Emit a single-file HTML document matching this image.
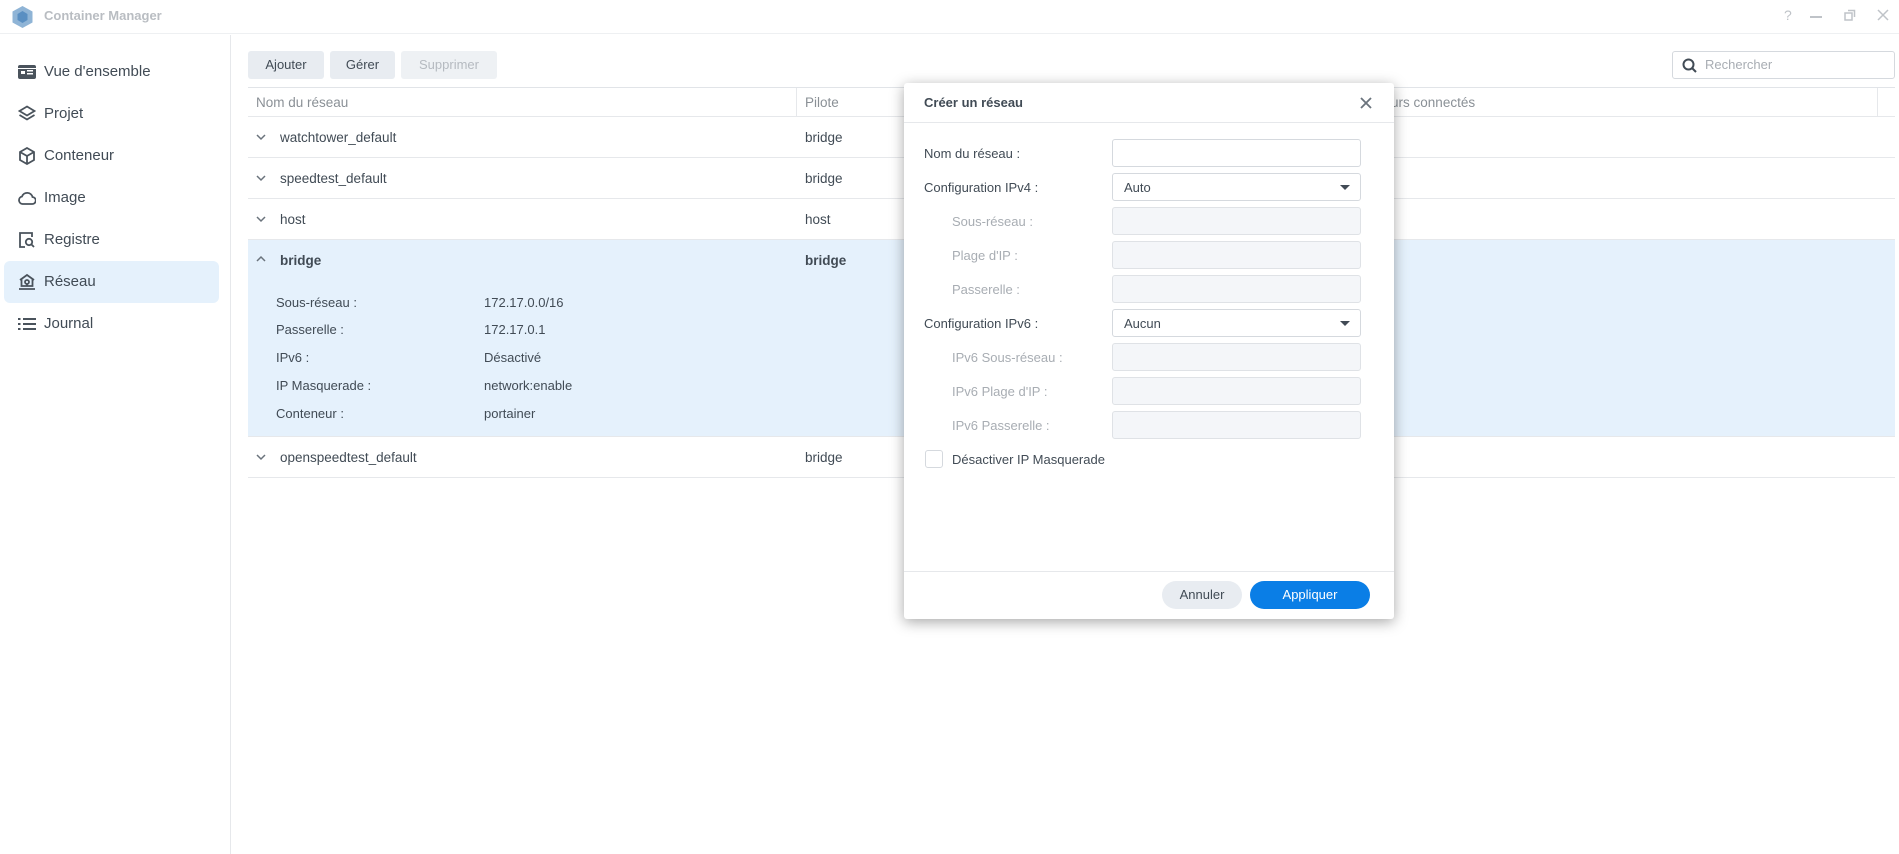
<!DOCTYPE html>
<html><head><meta charset="utf-8"><style>
*{box-sizing:border-box;margin:0;padding:0}
body{width:1899px;height:854px;overflow:hidden;background:#fff;font-family:"Liberation Sans",Verdana,sans-serif;color:#414b55;font-size:13px;position:relative}
.a{position:absolute}
.tb{left:0;top:0;width:1899px;height:34px;border-bottom:1px solid #eef0f2}
.side{left:0;top:35px;width:231px;height:819px;border-right:1px solid #e6e8eb}
.nav{position:absolute;left:4px;width:215px;height:42px;border-radius:6px;font-size:15px;line-height:42px;padding-left:40px}
.nav svg{position:absolute;left:14px;top:12px}
.sel{background:#e5f1fc}
.btn{top:51px;height:28px;border-radius:3px;background:#e8ecf1;font-size:13px;line-height:28px;text-align:center;color:#414b55}
.row{left:248px;width:1647px;border-bottom:1px solid #e6e8eb}
.rt{position:absolute;left:32px;font-size:13.5px}
.chev{position:absolute;left:8px}
.lbl{position:absolute;left:28px}
.val{position:absolute;left:236px}
.inp{left:1112px;width:249px;height:28px;border:1px solid #d5d9de;border-radius:3px;background:#fff}
.dis{background:#f4f6f9;border-color:#dfe2e6}
.fl{left:924px;font-size:13px}
.fi{left:952px;color:#a8adb3}
</style></head><body>
<div class="a tb"></div>
<svg class="a" style="left:11px;top:5px" width="23" height="24" viewBox="0 0 23 24"><polygon points="11.5,1 21.5,6.5 21.5,17.5 11.5,23 1.5,17.5 1.5,6.5" fill="#8fb4d6"/><polygon points="11.5,6 16.5,9 16.5,15 11.5,18 6.5,15 6.5,9" fill="#5a8fc2"/></svg>
<div class="a" style="left:44px;top:8px;font-weight:bold;color:#b9bdc2;font-size:13px">Container Manager</div>
<div class="a" style="left:1784px;top:7px;color:#bfc3c8;font-size:14px">?</div>
<div class="a" style="left:1810px;top:16px;width:12px;height:1.5px;background:#bfc3c8"></div>
<svg class="a" style="left:1844px;top:9px" width="12" height="12"><rect x="1" y="4" width="7" height="7" fill="none" stroke="#bfc3c8" stroke-width="1.5"/><path d="M4 1.5H10.5V8" fill="none" stroke="#bfc3c8" stroke-width="1.5"/></svg>
<svg class="a" style="left:1877px;top:9px" width="12" height="12"><path d="M1 1L11 11M11 1L1 11" stroke="#bfc3c8" stroke-width="1.5"/></svg>

<div class="a side">
<div class="nav" style="top:16px"><svg width="18" height="18" viewBox="0 0 18 18"><rect x="0" y="2" width="18" height="14" rx="2" fill="#4a535c"/><rect x="3" y="8" width="4" height="3" fill="#fff"/><rect x="9" y="7" width="6" height="1.5" fill="#fff"/><rect x="9" y="10" width="6" height="1.5" fill="#fff"/><rect x="0" y="5" width="18" height="1" fill="#fff"/></svg>Vue d'ensemble</div>
<div class="nav" style="top:58px"><svg width="18" height="18" viewBox="0 0 18 18" fill="none" stroke="#4a535c" stroke-width="1.8"><path d="M9 1.5L16.5 6L9 10.5L1.5 6Z"/><path d="M1.5 10L9 14.5L16.5 10"/></svg>Projet</div>
<div class="nav" style="top:100px"><svg width="18" height="18" viewBox="0 0 18 18" fill="none" stroke="#4a535c" stroke-width="1.8"><path d="M9 1L16 5V13L9 17L2 13V5Z"/><path d="M2 5L9 9L16 5M9 9V17"/></svg>Conteneur</div>
<div class="nav" style="top:142px"><svg width="18" height="18" viewBox="0 0 18 18" fill="none" stroke="#4a535c" stroke-width="1.8"><path d="M4.5 15H14a3.5 3.5 0 0 0 .5-7A5.5 5.5 0 0 0 4 7.5 3.8 3.8 0 0 0 4.5 15Z"/></svg>Image</div>
<div class="nav" style="top:184px"><svg width="18" height="18" viewBox="0 0 18 18" fill="none" stroke="#4a535c" stroke-width="1.8"><path d="M7 16H2V2H14V6"/><circle cx="11" cy="11" r="3.2"/><path d="M13.5 13.5L16 16"/></svg>Registre</div>
<div class="nav sel" style="top:226px"><svg width="18" height="18" viewBox="0 0 18 18" fill="none" stroke="#4a535c" stroke-width="1.8"><path d="M2 7L9 2L16 7M3.5 6V13H14.5V6"/><circle cx="9" cy="9" r="2"/><path d="M9 11V13M1 16H17"/></svg>Réseau</div>
<div class="nav" style="top:268px"><svg width="18" height="18" viewBox="0 0 18 18" fill="#4a535c"><rect x="0" y="3" width="2.5" height="2"/><rect x="5" y="3" width="13" height="2"/><rect x="0" y="8" width="2.5" height="2"/><rect x="5" y="8" width="13" height="2"/><rect x="0" y="13" width="2.5" height="2"/><rect x="5" y="13" width="13" height="2"/></svg>Journal</div>
</div>

<div class="a btn" style="left:248px;width:76px">Ajouter</div>
<div class="a btn" style="left:330px;width:65px">Gérer</div>
<div class="a btn" style="left:401px;width:96px;background:#eef1f4;color:#b5bac0">Supprimer</div>
<div class="a" style="left:1672px;top:51px;width:223px;height:28px;border:1px solid #d5d9de;border-radius:3px"></div>
<svg class="a" style="left:1682px;top:58px" width="15" height="15" fill="none" stroke="#414b55" stroke-width="2"><circle cx="6.5" cy="6.5" r="5"/><path d="M10 10L14 14"/></svg>
<div class="a" style="left:1705px;top:57px;color:#a8adb3">Rechercher</div>

<div class="a" style="left:248px;top:87px;width:1647px;height:1px;background:#e1e4e8"></div>
<div class="a row" style="top:88px;height:29px;color:#8a9096"><span class="rt" style="left:8px;top:7px">Nom du réseau</span><span class="rt" style="left:557px;top:7px">Pilote</span><span class="rt" style="left:1092px;top:7px">Conteneurs connectés</span></div>
<div class="a" style="left:796px;top:88px;width:1px;height:28px;background:#e6e8eb"></div>
<div class="a" style="left:1877px;top:88px;width:1px;height:28px;background:#e6e8eb"></div>

<svg width="0" height="0" style="position:absolute"><defs><path id="dn" d="M1 1L5 5L9 1" fill="none" stroke="#6a737c" stroke-width="1.5"/></defs></svg>
<div class="a row" style="top:117px;height:41px"><svg class="chev" style="top:17px" width="10" height="7"><use href="#dn"/></svg><span class="rt" style="top:13px">watchtower_default</span><span class="rt" style="left:557px;top:13px">bridge</span></div>
<div class="a row" style="top:158px;height:41px"><svg class="chev" style="top:17px" width="10" height="7"><use href="#dn"/></svg><span class="rt" style="top:13px">speedtest_default</span><span class="rt" style="left:557px;top:13px">bridge</span></div>
<div class="a row" style="top:199px;height:41px"><svg class="chev" style="top:17px" width="10" height="7"><use href="#dn"/></svg><span class="rt" style="top:13px">host</span><span class="rt" style="left:557px;top:13px">host</span></div>
<div class="a row" style="top:240px;height:197px;background:#e5f1fc">
<svg class="chev" style="top:15px" width="10" height="7"><path d="M1 6L5 2L9 6" fill="none" stroke="#6a737c" stroke-width="1.5"/></svg>
<span class="rt" style="top:13px;font-weight:bold">bridge</span><span class="rt" style="left:557px;top:13px;font-weight:bold">bridge</span>
<span class="lbl" style="top:55px">Sous-réseau :</span><span class="val" style="top:55px">172.17.0.0/16</span>
<span class="lbl" style="top:82px">Passerelle :</span><span class="val" style="top:82px">172.17.0.1</span>
<span class="lbl" style="top:110px">IPv6 :</span><span class="val" style="top:110px">Désactivé</span>
<span class="lbl" style="top:138px">IP Masquerade :</span><span class="val" style="top:138px">network:enable</span>
<span class="lbl" style="top:166px">Conteneur :</span><span class="val" style="top:166px">portainer</span>
</div>
<div class="a row" style="top:437px;height:41px"><svg class="chev" style="top:17px" width="10" height="7"><use href="#dn"/></svg><span class="rt" style="top:13px">openspeedtest_default</span><span class="rt" style="left:557px;top:13px">bridge</span></div>

<div class="a" style="left:904px;top:83px;width:490px;height:536px;background:#fff;border-radius:3px;box-shadow:0 3px 14px rgba(0,0,0,.35)"></div>
<div class="a" style="left:924px;top:95px;font-weight:bold;font-size:13px">Créer un réseau</div>
<svg class="a" style="left:1360px;top:97px" width="12" height="12"><path d="M1 1L11 11M11 1L1 11" stroke="#6a737c" stroke-width="1.8"/></svg>
<div class="a" style="left:904px;top:122px;width:490px;height:1px;background:#e6e8eb"></div>

<div class="a fl" style="top:146px">Nom du réseau :</div><div class="a inp" style="top:139px"></div>
<div class="a fl" style="top:180px">Configuration IPv4 :</div><div class="a inp" style="top:173px"><span class="a" style="left:11px;top:6px">Auto</span><svg class="a" style="left:227px;top:11px" width="10" height="6"><path d="M0 0H10L5 5Z" fill="#414b55"/></svg></div>
<div class="a fl fi" style="top:214px">Sous-réseau :</div><div class="a inp dis" style="top:207px"></div>
<div class="a fl fi" style="top:248px">Plage d'IP :</div><div class="a inp dis" style="top:241px"></div>
<div class="a fl fi" style="top:282px">Passerelle :</div><div class="a inp dis" style="top:275px"></div>
<div class="a fl" style="top:316px">Configuration IPv6 :</div><div class="a inp" style="top:309px"><span class="a" style="left:11px;top:6px">Aucun</span><svg class="a" style="left:227px;top:11px" width="10" height="6"><path d="M0 0H10L5 5Z" fill="#414b55"/></svg></div>
<div class="a fl fi" style="top:350px">IPv6 Sous-réseau :</div><div class="a inp dis" style="top:343px"></div>
<div class="a fl fi" style="top:384px">IPv6 Plage d'IP :</div><div class="a inp dis" style="top:377px"></div>
<div class="a fl fi" style="top:418px">IPv6 Passerelle :</div><div class="a inp dis" style="top:411px"></div>
<div class="a" style="left:925px;top:450px;width:18px;height:18px;border:1px solid #d5d9de;border-radius:3px"></div>
<div class="a fl" style="left:952px;top:452px">Désactiver IP Masquerade</div>

<div class="a" style="left:904px;top:571px;width:490px;height:1px;background:#e6e8eb"></div>
<div class="a" style="left:1162px;top:581px;width:80px;height:28px;border-radius:14px;background:#e8ecf1;text-align:center;line-height:28px">Annuler</div>
<div class="a" style="left:1250px;top:581px;width:120px;height:28px;border-radius:14px;background:#0a7ee6;color:#fff;text-align:center;line-height:28px">Appliquer</div>
</body></html>
